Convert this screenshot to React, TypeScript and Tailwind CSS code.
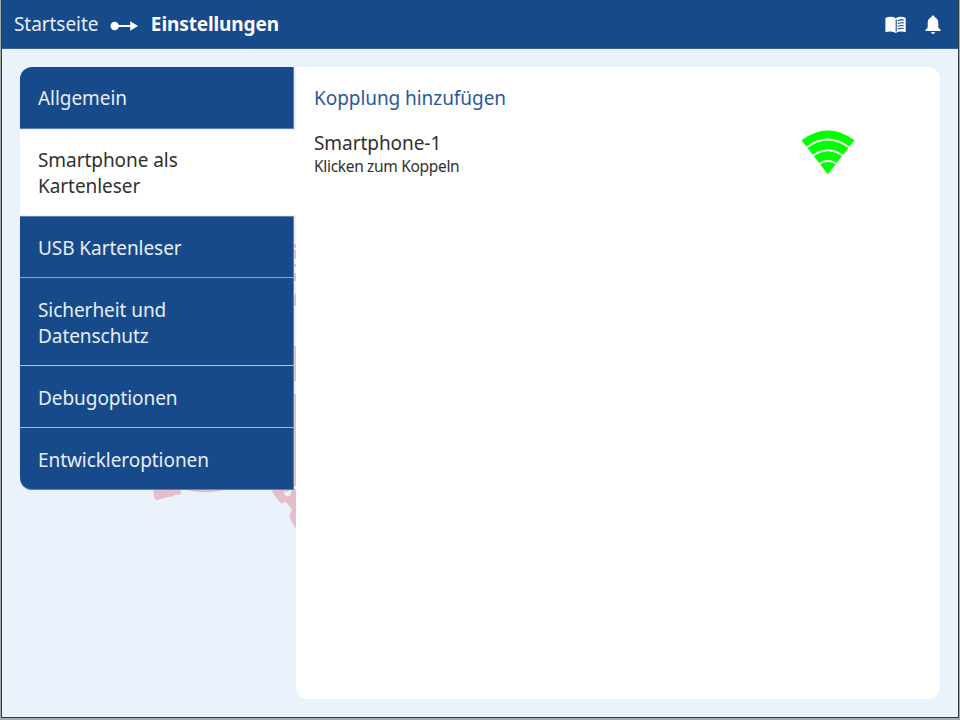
import React from "react";

function Backdrop() {
  return (
    <svg className="absolute left-[140px] top-[220px]" width="156" height="320" viewBox="140 220 156 320" fill="#e3bfc9" aria-hidden="true">
      <path d="M294 244h2v4h-2zM294 250h2v9h-2zM294 264h2v3h-2zM294 273h2v8h-2zM294 297l2-5v14h-2zM294 346h2v35h-2zM294 394h2v92h-2z" />
      <path d="M153 489l1.500 10 2 1.200 13-3.500 4-.5 1-1.200 7-1-2-6z" />
      <path d="M185 489c9 4.500 28 4 46 0z" />
      <path fillRule="evenodd" d="M271 489h25v39c-5-5-7-12-6-15l2-2.500c-2-5-5-8-8-8.500l-2 2c-5-4-8-9-11-15zM283.800 491.500c0 6 7 7 7.500 0l.5-2h-2c-1 2-3 2.500-6 2z" />
    </svg>
  );
}

function BreadcrumbArrow() {
  return (
    <svg width="28" height="12" viewBox="0 0 28 12" fill="white">
      <circle cx="4.700" cy="6" r="4.200" />
      <path d="M7 4.900h13.200V1.300L28 6l-7.800 4.700V7.100H7z" />
    </svg>
  );
}

function BookIcon() {
  return (
    <svg width="22" height="18" viewBox="0 0 22 18">
      <path d="M.4 2C4 .4 7.700.5 10.700 2.300 13.700.5 17.400.4 20.700 2v14.200c-3.300-1.200-7-1-10 .8-3-1.800-7-2-10.300-.8z" fill="white" />
      <path d="M11.200 3.500v12M12.700 4.700c2-.8 4-1 6-.6M12.700 7.500c2-.8 4-1 6-.6M12.700 10.300c2-.8 4-1 6-.6M12.700 13.100c2-.8 4-1 6-.6" fill="none" stroke="#174a8b" strokeWidth="1.100" />
    </svg>
  );
}

function BellIcon() {
  return (
    <svg width="16" height="19" viewBox="0 0 16 19" fill="white">
      <path d="M8 .4c-.9 0-1.500.6-1.500 1.400v.5C4 3 2.700 5 2.700 7.800v4.700L.5 14.800V16h15v-1.200l-2.200-2.300V7.800c0-2.800-1.300-4.800-3.800-5.500v-.5C9.500 1 8.900.4 8 .4zM6 17h4c0 1.100-.9 1.900-2 1.900S6 18.100 6 17z" />
    </svg>
  );
}

function SignalIcon() {
  return (
    <svg width="54" height="45" viewBox="0 0 54 45">
      <path d="M.5 10.300Q26.800-9.200 53.500 10.300L26.800 44.300z" fill="#00ff00" />
      <g fill="none" stroke="white" strokeWidth="2">
        <path d="M5 18Q26.800 1 49 18" />
        <path d="M11 26.500Q26.800 14 43 26.500" />
        <path d="M17 35Q26.800 27 37 35" />
      </g>
    </svg>
  );
}

const itemText = "block px-[18px] text-[19px] leading-[26px] tracking-[-0.06px]";

export default function App() {
  return (
    <div className="flex h-[720px] w-[960px] overflow-hidden bg-[#a9ada9] px-px pb-[2px] font-['Noto_Sans',sans-serif]">
      <div className="relative isolate flex w-full flex-col border-x border-b border-[#30363b] bg-[#eaf2fc]">
        <div className="absolute -left-[2px] top-0 -z-10">
          <Backdrop />
        </div>
        <header className="flex h-[49px] shrink-0 items-center border-b border-[#356095] bg-[#174a8b] pl-3 pr-[17px] text-[19px] leading-[26px] tracking-[-0.06px] text-[#e8edf4]">
          <a>Startseite</a>
          <span className="ml-3 mr-[12.500px] mt-[3px]"><BreadcrumbArrow /></span>
          <b className="font-bold tracking-[-0.11px] text-white">Einstellungen</b>
          <div className="ml-auto mt-px flex items-center gap-[18px]">
            <BookIcon />
            <BellIcon />
          </div>
        </header>
        <main className="flex h-[650px] pl-[18px] pr-[18px] pt-[18px]">
          <nav className="w-[276px] text-[#e8edf4]">
            <div className="mr-[2px] h-[62px] rounded-tl-[12px] border-b border-r border-[#5e82b0] bg-[#174a8b] pt-[18px]"><span className={itemText}>Allgemein</span></div>
            <div className="mt-[1px] h-[85px] bg-white pt-[17px] text-[#303030]"><span className={itemText}>Smartphone als<br />Kartenleser</span></div>
            <div className="mr-[2px] mt-[1px] h-[62px] border-b border-r border-t border-b-[#8ba4c4] border-r-[#5e82b0] border-t-[#5e82b0] bg-[#174a8b] pt-[18px]"><span className={itemText}>USB Kartenleser</span></div>
            <div className="mr-[2px] h-[88px] border-b border-r border-b-[#b9c8dc] border-r-[#5e82b0] bg-[#174a8b] pt-[19px]"><span className={itemText}>Sicherheit und<br />Datenschutz</span></div>
            <div className="mr-[2px] h-[62px] border-b border-r border-b-[#a5b8d1] border-r-[#5e82b0] bg-[#174a8b] pt-[19px]"><span className={itemText}>Debugoptionen</span></div>
            <div className="mr-[2px] h-[62px] rounded-bl-[12px] border-b border-r border-[#5e82b0] bg-[#174a8b] pt-[19px]"><span className={itemText}>Entwickleroptionen</span></div>
          </nav>
          <section className="h-[632px] flex-1 rounded-r-[12px] rounded-bl-[12px] bg-white px-[18px] pt-[18px]">
            <h1 className="text-[19px] leading-[26px] tracking-[-0.06px] text-[#28599b]">Kopplung hinzufügen</h1>
            <div className="mt-[19px] flex justify-between text-[#303030]">
              <div>
                <p className="text-[19px] leading-[26px] tracking-[-0.06px]">Smartphone-1</p>
                <p className="text-[15.500px] leading-[20px] tracking-[-0.320px]">Klicken zum Koppeln</p>
              </div>
              <span className="mr-[67px]"><SignalIcon /></span>
            </div>
          </section>
        </main>
      </div>
    </div>
  );
}
